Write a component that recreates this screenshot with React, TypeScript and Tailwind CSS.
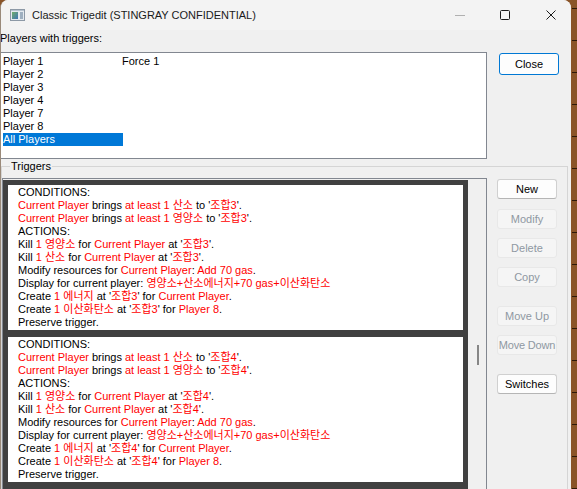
import React from "react";

const FONT = { fontFamily: '"Liberation Sans", "Noto Sans CJK KR", Arial, sans-serif' };

const R = ({ children }: { children: React.ReactNode }) => (
  <span className="text-[#ff0000]">{children}</span>
);

function TriggerBlock({ n }: { n: number }) {
  const loc = `조합${n}`;
  return (
    <div className="h-[145px] bg-white pl-[10px] pt-[1px] text-[11px] leading-[13px] text-black whitespace-nowrap overflow-hidden">
      <div>CONDITIONS:</div>
      <div>
        <R>Current Player</R> brings <R>at least 1</R> <R>산소</R> to '<R>{loc}</R>'.
      </div>
      <div>
        <R>Current Player</R> brings <R>at least 1</R> <R>영양소</R> to '<R>{loc}</R>'.
      </div>
      <div>ACTIONS:</div>
      <div>
        Kill <R>1</R> <R>영양소</R> for <R>Current Player</R> at '<R>{loc}</R>'.
      </div>
      <div>
        Kill <R>1</R> <R>산소</R> for <R>Current Player</R> at '<R>{loc}</R>'.
      </div>
      <div>
        Modify resources for <R>Current Player</R>: <R>Add 70 gas</R>.
      </div>
      <div>
        Display for current player: <R>영양소+산소에너지+70 gas+이산화탄소</R>
      </div>
      <div>
        Create <R>1</R> <R>에너지</R> at '<R>{loc}</R>' for <R>Current Player</R>.
      </div>
      <div>
        Create <R>1</R> <R>이산화탄소</R> at '<R>{loc}</R>' for <R>Player 8</R>.
      </div>
      <div>Preserve trigger.</div>
    </div>
  );
}

function Btn({ label, disabled, className }: { label: string; disabled?: boolean; className: string }) {
  return (
    <div
      className={
        "w-[60px] h-[20px] flex items-center justify-center rounded-[3px] border text-[11px] " +
        (disabled
          ? "bg-[#f5f5f5] border-[#e8e8e8] text-[#8f98a2] "
          : "bg-[#fdfdfd] border-[#d0d0d0] border-b-[#b5b5b5] text-black ") +
        className
      }
    >
      {label}
    </div>
  );
}

export default function App() {
  const players = ["Player 1", "Player 2", "Player 3", "Player 4", "Player 7", "Player 8"];
  const ticks = Array.from({ length: 16 });
  return (
    <div className="w-[577px] h-[489px] overflow-hidden bg-[#8a5428] flex" style={FONT}>
      {/* window */}
      <div className="w-[571px] h-[489px] rounded-t-[8px] overflow-hidden bg-[#f0f0f0] flex flex-col border-l border-[#9a8a7a]">
        {/* title bar */}
        <div className="h-[30px] shrink-0 bg-[#f3f3f3] flex items-center">
          <div className="ml-[9px] w-[15px] h-[12px]">
            <svg width="15" height="12" viewBox="0 0 15 12">
              <defs>
                <linearGradient id="g1" x1="0" y1="0" x2="1" y2="1">
                  <stop offset="0" stopColor="#6fae6a" />
                  <stop offset="1" stopColor="#3f74b5" />
                </linearGradient>
              </defs>
              <rect x="0.5" y="0.5" width="14" height="11" fill="#e4eaef" stroke="#8d99a6" />
              <rect x="2" y="3" width="6" height="7" fill="url(#g1)" />
              <rect x="10" y="3" width="3" height="7" fill="#9fb0c0" />
              <rect x="1" y="1" width="13" height="1" fill="#b7c3cf" />
            </svg>
          </div>
          <div className="ml-[7px] text-[11px] text-[#1a1a1a]">Classic Trigedit (STINGRAY CONFIDENTIAL)</div>
          <div className="ml-auto flex items-center mr-[15px]">
            <div className="w-[10px] h-px bg-[#b0b0b0]" />
            <div className="ml-[35px] w-[10px] h-[10px] border border-[#1a1a1a] rounded-[1.5px]" />
            <div className="ml-[36px] w-[10px] h-[10px]">
              <svg width="10" height="10" viewBox="0 0 10 10">
                <path d="M0.5 0.5 L9.5 9.5 M9.5 0.5 L0.5 9.5" stroke="#1a1a1a" strokeWidth="1" />
              </svg>
            </div>
          </div>
        </div>

        {/* body */}
        <div className="flex-1 flex flex-col text-[11px] text-black">
          <div className="pt-[2px] leading-[13px] -ml-px">Players with triggers:</div>
          <div className="mt-[7px] flex items-start -ml-px">
            <div className="w-[487px] h-[107px] bg-white border border-[#828790] pt-[2px] pl-[2px] flex leading-[13px]">
              <div className="w-[120px] flex flex-col">
                {players.map((p) => (
                  <div key={p} className="h-[13px]">
                    {p}
                  </div>
                ))}
                <div className="h-[13px] bg-[#0078d7] text-white">All Players</div>
              </div>
              <div className="-ml-px">Force 1</div>
            </div>
            <div className="ml-[12px] mt-px w-[60px] h-[22px] flex items-center justify-center rounded-[3px] border border-[#0078d4] bg-[#fdfdfd] text-[11px]">
              Close
            </div>
          </div>

          {/* Triggers group */}
          <div className="relative mt-[7px] w-[567px] flex-1 border-t border-l border-r border-[#d5d5d5] flex items-start pt-[11px]">
            <div className="absolute -top-[7px] left-[8px] bg-[#f0f0f0] px-[1px] leading-[13px]">Triggers</div>
            <div className="w-[485px] h-[320px] border border-[#828790] bg-[#f0f0f0] flex">
              <div className="w-[465px] mt-px bg-[#404040] pt-[5px] px-[5px] flex flex-col gap-[7px]">
                <TriggerBlock n={3} />
                <TriggerBlock n={4} />
              </div>
              <div className="w-[18px] flex flex-col items-center pt-[166px]">
                <div className="w-[2px] h-[20px] bg-[#868686] ml-[2px]" />
              </div>
            </div>
            <div className="ml-[10px] flex flex-col">
              <Btn label="New" className="mt-px" />
              <Btn label="Modify" disabled className="mt-[10px]" />
              <Btn label="Delete" disabled className="mt-[9px]" />
              <Btn label="Copy" disabled className="mt-[9px]" />
              <Btn label="Move Up" disabled className="mt-[19px]" />
              <Btn label="Move Down" disabled className="mt-[9px] whitespace-nowrap tracking-[-0.2px]" />
              <Btn label="Switches" className="mt-[19px]" />
            </div>
          </div>
        </div>
      </div>
      {/* desktop strip */}
      <div className="flex-1 flex flex-col items-end pt-[8px] gap-[31px]">
        {ticks.map((_, i) => (
          <div key={i} className="w-[5px] h-px bg-[#2b1808]" />
        ))}
      </div>
    </div>
  );
}
